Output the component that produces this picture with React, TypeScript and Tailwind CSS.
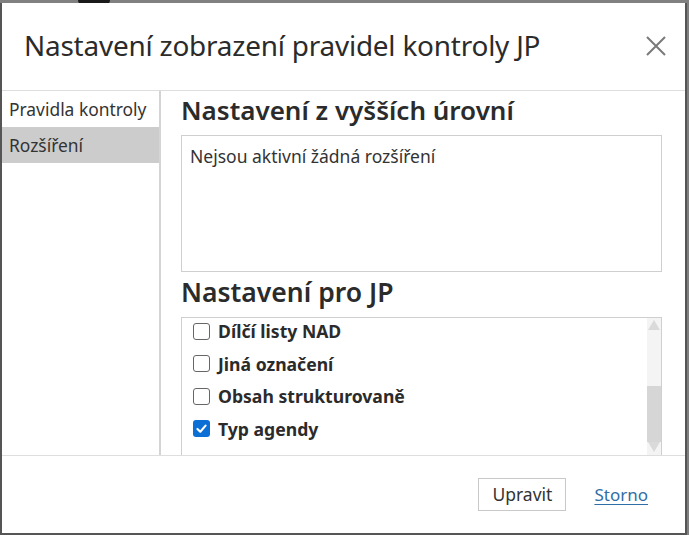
import React from "react";

const font = { fontFamily: '"Noto Sans", "Open Sans", sans-serif' };

function Box({ checked }: { checked?: boolean }) {
  if (checked) {
    return (
      <span className="w-[17px] h-[17px] rounded-[3px] bg-[#0b6fd6] flex items-center justify-center shrink-0">
        <svg width="13" height="13" viewBox="0 0 16 16">
          <path d="M3 8.5 L6.5 12 L13 4.5" fill="none" stroke="white" strokeWidth="2.6" strokeLinecap="round" strokeLinejoin="round" />
        </svg>
      </span>
    );
  }
  return <span className="w-[17px] h-[17px] rounded-[3px] border-[1.5px] border-[#666] bg-white shrink-0" />;
}

export default function App() {
  const items = [
    { label: "Dílčí listy NAD", checked: false },
    { label: "Jiná označení", checked: false },
    { label: "Obsah strukturovaně", checked: false },
    { label: "Typ agendy", checked: true },
  ];
  return (
    <div className="w-[689px] h-[535px] bg-[#808080] overflow-hidden relative" style={font}>
      <div className="absolute left-[78px] top-0 w-[32px] h-[4px] bg-[#1a1a1a] rounded-b-[6px]" />
      <div className="absolute left-[0px] top-[3px] w-[687px] h-[532px] bg-white border-l-2 border-r-2 border-b-2 border-[#555] flex flex-col text-[#333]">
        <div className="h-[88px] shrink-0 flex items-center justify-between pl-[22px] pr-[19px] border-b border-[#dedede]">
          <div className="text-[27.9px] tracking-[-0.2px] text-[#2b2b2b] leading-none pb-[1px]">Nastavení zobrazení pravidel kontroly JP</div>
          <svg width="20" height="20" viewBox="0 0 20 20" className="mb-[2px]">
            <path d="M1 1 L19 19 M19 1 L1 19" stroke="#7a7a7a" strokeWidth="2" />
          </svg>
        </div>
        <div className="flex flex-1 min-h-0 border-b border-[#dedede]">
          <div className="w-[159px] shrink-0 border-r-2 border-[#d4d4d4] flex flex-col">
            <div className="h-[36px] flex items-center pl-[7px] text-[17.4px]">Pravidla kontroly</div>
            <div className="h-[36px] flex items-center pl-[7px] text-[17.4px] bg-[#cccccc]">Rozšíření</div>
          </div>
          <div className="flex-1 pl-[20px] pr-[23px] flex flex-col min-w-0">
            <div className="text-[26px] font-semibold text-[#2b2b2b] leading-none h-[44px] shrink-0 flex items-center pb-[6px]">Nastavení z vyšších úrovní</div>
            <div className="h-[137px] border border-[#cfcfcf] px-[8px] pt-[9px] text-[17.5px] leading-[22px] shrink-0">Nejsou aktivní žádná rozšíření</div>
            <div className="text-[26.5px] font-semibold text-[#2b2b2b] leading-none h-[45px] shrink-0 flex items-center pb-[5px]">Nastavení pro JP</div>
            <div className="flex-1 border border-[#cfcfcf] border-b-0 flex min-h-0 overflow-hidden">
              <div className="flex-1 flex flex-col pl-[11px] mt-[-3px]">
                {items.map((it) => (
                  <div key={it.label} className="h-[32.5px] flex items-center gap-[8px] shrink-0">
                    <Box checked={it.checked} />
                    <span className="text-[17.6px] font-bold text-[#2b2b2b]">{it.label}</span>
                  </div>
                ))}
              </div>
              <div className="w-[14px] shrink-0 bg-[#f4f4f4] flex flex-col items-center">
                <svg width="14" height="14" viewBox="0 0 14 14" className="shrink-0">
                  <path d="M7 2 L13 12 L1 12 Z" fill="#dadada" />
                </svg>
                <div className="w-[14px] h-[56px] mt-[54px] bg-[#d6d6d6]" />
                <svg width="14" height="12" viewBox="0 0 14 12" className="shrink-0">
                  <path d="M1 0 L13 0 L7 10 Z" fill="#dadada" />
                </svg>
              </div>
            </div>
          </div>
        </div>
        <div className="h-[77px] shrink-0 flex items-center justify-end pr-[37px] gap-[28px]">
          <button className="w-[88px] h-[33px] border border-[#c8c8c8] bg-white text-[17.5px] text-[#333]">Upravit</button>
          <a className="text-[17px] text-[#2f6ea6] underline underline-offset-[3px]">Storno</a>
        </div>
      </div>
    </div>
  );
}
